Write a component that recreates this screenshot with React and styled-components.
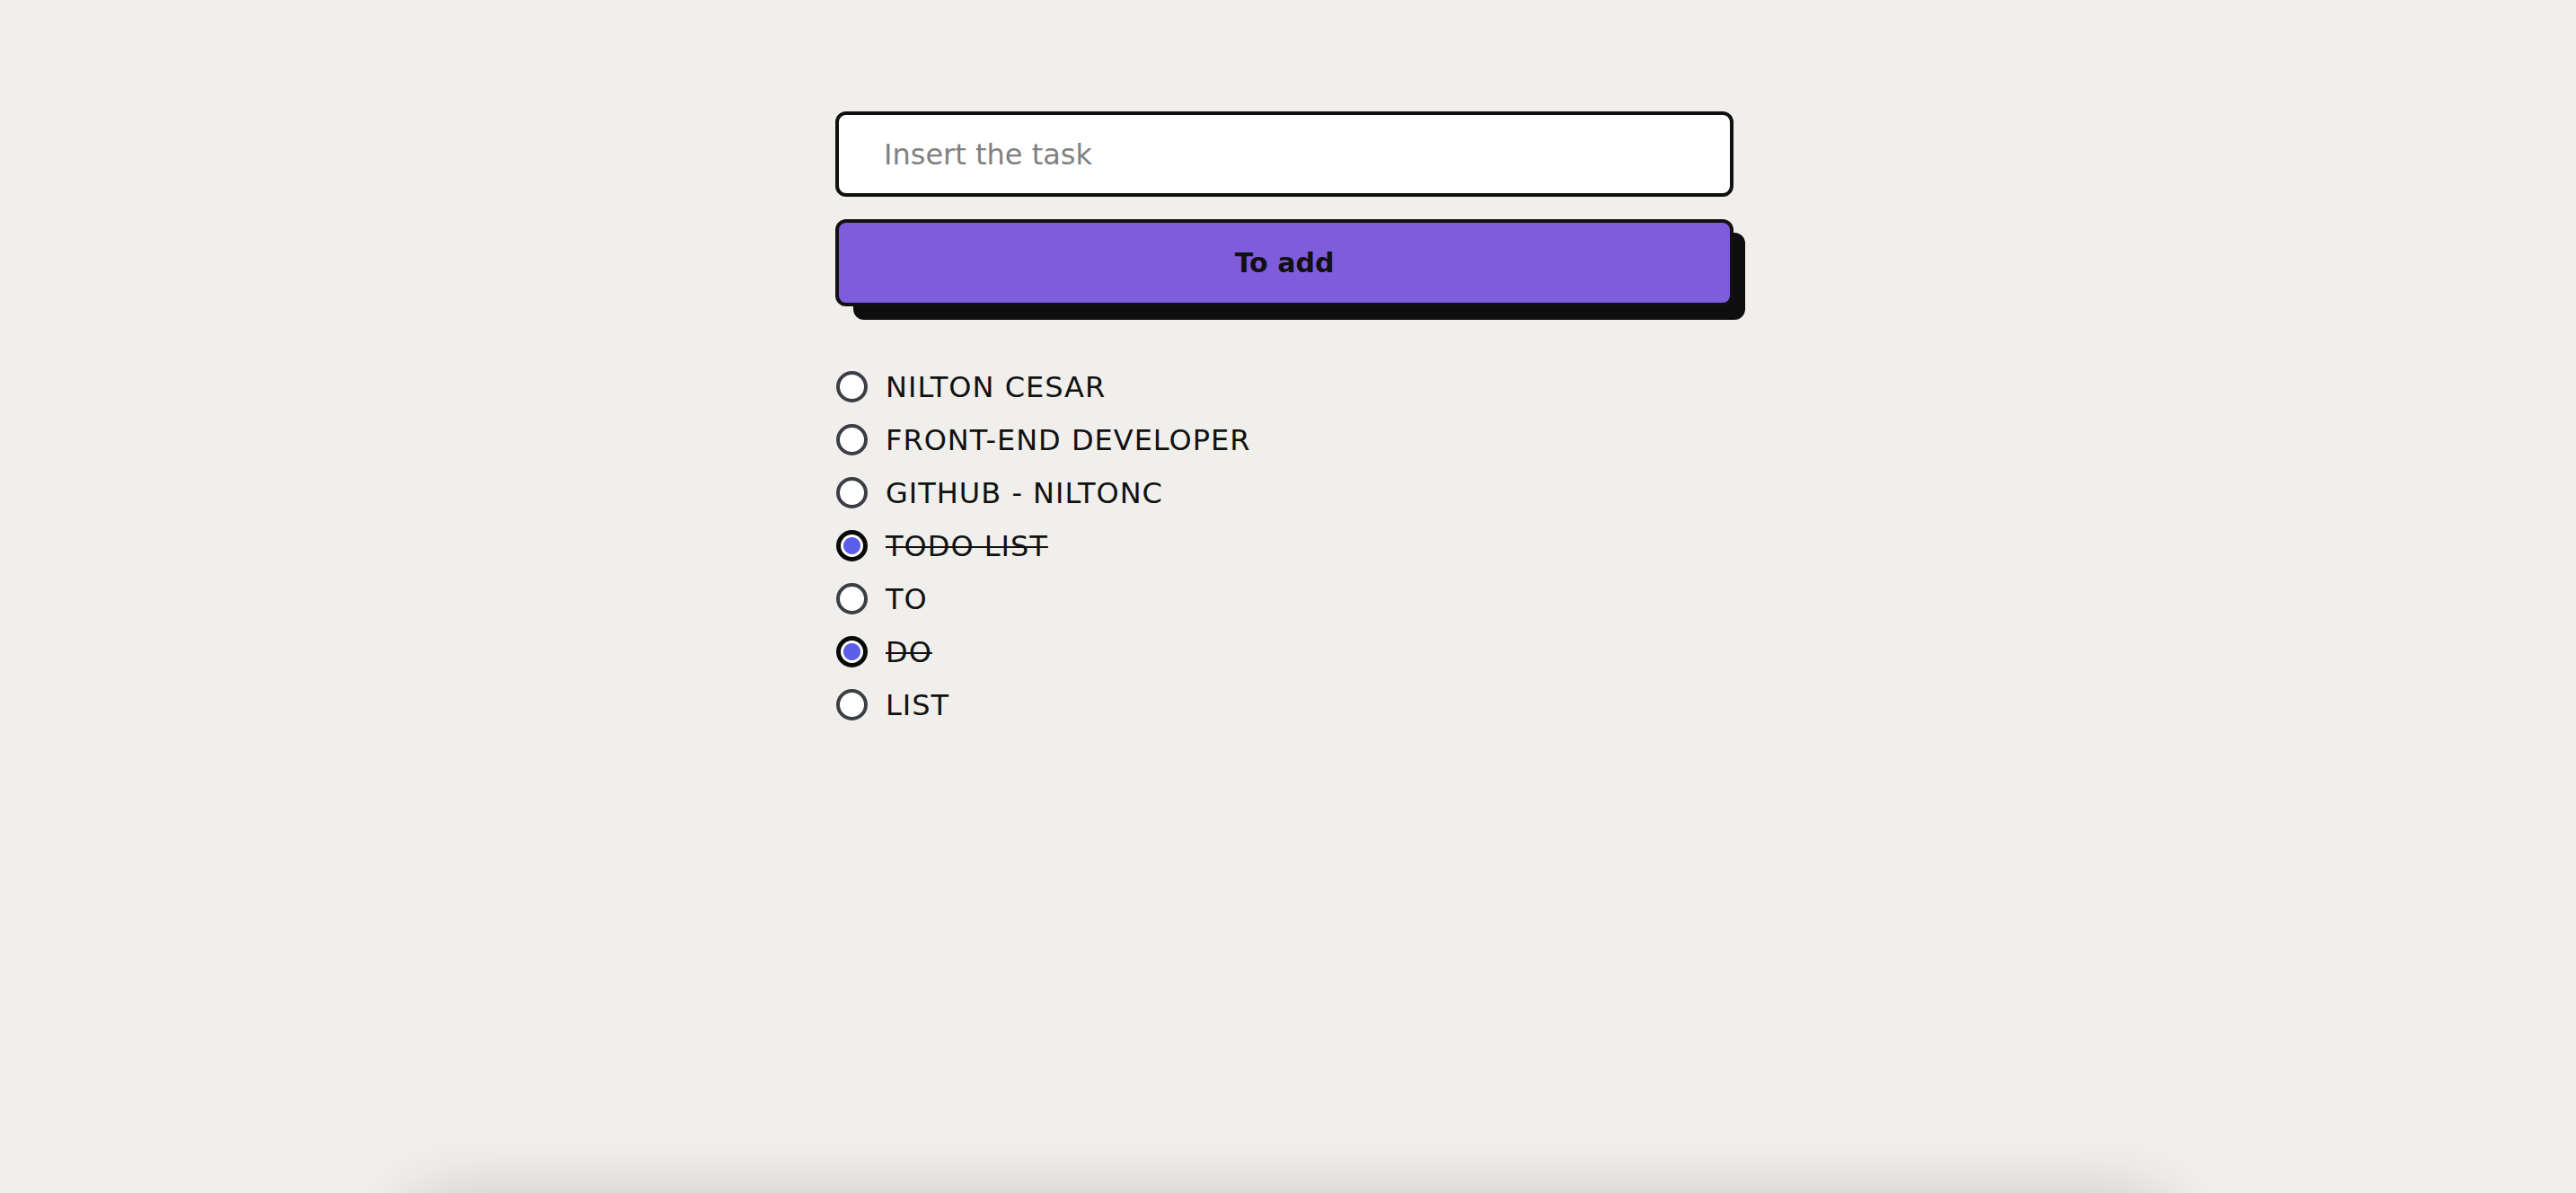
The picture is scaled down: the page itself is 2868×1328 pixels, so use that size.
import React from "react";
import styled, { createGlobalStyle } from "styled-components";

const GlobalStyle = createGlobalStyle`
  * { box-sizing: border-box; }
  html, body {
    margin: 0;
    padding: 0;
    background: #f0efeb;
    font-family: "DejaVu Sans", "Liberation Sans", sans-serif;
    color: #111111;
  }
`;

const Page = styled.main`
  min-height: 100vh;
  display: flex;
  justify-content: center;
  padding-top: 124px;
`;

const Column = styled.div`
  width: 1008px;
  padding-right: 8px;
  display: flex;
  flex-direction: column;
`;

const TaskInput = styled.input`
  width: 100%;
  height: 95px;
  border: 4px solid #111111;
  border-radius: 12px;
  background: #ffffff;
  padding: 0 0 0 50px;
  font-family: "DejaVu Sans", "Liberation Sans", sans-serif;
  font-size: 32px;
  color: #111111;
  outline: none;
  &::placeholder {
    color: #808080;
  }
`;

const ButtonWrap = styled.div`
  position: relative;
  margin-top: 25px;
  &::before {
    content: "";
    position: absolute;
    left: 20px;
    right: -13px;
    top: 15px;
    bottom: -15px;
    border-radius: 12px;
    background: #0e0e0e;
  }
`;

const AddButton = styled.button`
  position: relative;
  display: block;
  width: 100%;
  height: 97px;
  border: 4px solid #111111;
  border-radius: 12px;
  background: #7e5cdb;
  font-family: "DejaVu Sans", "Liberation Sans", sans-serif;
  font-weight: 700;
  font-size: 30px;
  color: #111111;
  cursor: pointer;
`;

const TaskList = styled.ul`
  list-style: none;
  margin: 60px 0 0;
  padding: 0;
  display: flex;
  flex-direction: column;
`;

const TaskRow = styled.li`
  height: 59px;
  display: flex;
  align-items: center;
  gap: 20px;
  padding-left: 1px;
`;

const Radio = styled.span`
  flex: none;
  width: 35px;
  height: 35px;
  border-radius: 50%;
  border: ${(p) => (p.$checked ? "5px solid #0a0a0a" : "4px solid #3b3f45")};
  background: ${(p) =>
    p.$checked
      ? "radial-gradient(circle, #5b5ee8 0, #5b5ee8 9px, #ffffff 10px)"
      : "#ffffff"};
`;

const TaskText = styled.span`
  font-size: 32px;
  line-height: 1;
  letter-spacing: 1px;
  color: #111111;
  text-decoration: ${(p) => (p.$done ? "line-through" : "none")};
  text-decoration-thickness: 2px;
`;

const Sheet = styled.div`
  width: 1956px;
  height: 300px;
  margin: 12px auto 0;
  border-radius: 40px;
  background: #f0efeb;
  box-shadow: 0 0 80px rgba(0, 0, 0, 0.22);
`;

const tasks = [
  { text: "NILTON CESAR", done: false },
  { text: "FRONT-END DEVELOPER", done: false },
  { text: "GITHUB - NILTONC", done: false },
  { text: "TODO LIST", done: true },
  { text: "TO", done: false },
  { text: "DO", done: true },
  { text: "LIST", done: false },
];

export default function App() {
  return (
    <>
      <GlobalStyle />
      <Page>
        <Column>
          <TaskInput placeholder="Insert the task" />
          <ButtonWrap>
            <AddButton type="button">To add</AddButton>
          </ButtonWrap>
          <TaskList>
            {tasks.map((t) => (
              <TaskRow key={t.text}>
                <Radio $checked={t.done} />
                <TaskText $done={t.done}>{t.text}</TaskText>
              </TaskRow>
            ))}
          </TaskList>
        </Column>
      </Page>
      <Sheet />
    </>
  );
}
